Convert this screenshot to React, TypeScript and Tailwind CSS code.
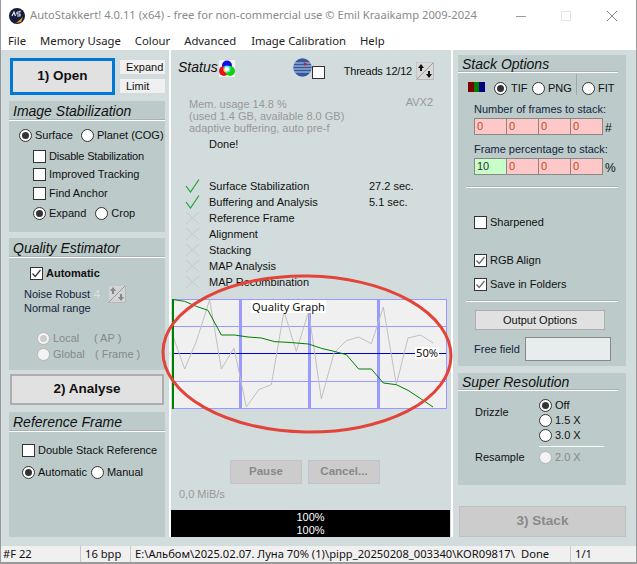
import React from "react";

const cx = (...a: string[]) => a.join(" ");

function Radio({ on, off, className = "" }: { on?: boolean; off?: boolean; className?: string }) {
  return (
    <span className={cx("flex items-center justify-center w-[13px] h-[13px] rounded-full border shrink-0", off ? "border-[#b5b5b5] bg-[#f4f4f4]" : "border-[#333] bg-white", className)}>
      {on && <span className={cx("w-[7px] h-[7px] rounded-full", off ? "bg-[#ccc]" : "bg-[#333]")} />}
    </span>
  );
}
function Check({ on, grey }: { on?: boolean; grey?: boolean }) {
  return (
    <span className="flex items-center justify-center w-[13px] h-[13px] border border-[#333] bg-white shrink-0">
      {on && (
        <svg width="11" height="11" viewBox="0 0 11 11">
          <path d="M1.5 5.5 L4.2 8.5 L9.5 2" fill="none" stroke={grey ? "#666" : "#333"} strokeWidth="1.2" />
        </svg>
      )}
    </span>
  );
}
function PanelTitle({ children, w = "" }: { children: React.ReactNode; w?: string }) {
  return (
    <div className={cx("h-[20px] pl-[4px] text-[14px] leading-[20px] italic text-[#111] border-b border-b-white shadow-[0_-1px_0_0_#a9b3b3_inset]", w)}>
      {children}
    </div>
  );
}
function ArrowsBtn({ grey }: { grey?: boolean }) {
  const c = grey ? "#888" : "#111";
  return (
    <svg width="18" height="18" viewBox="0 0 18 18" className="shrink-0">
      <rect x="0" y="0" width="18" height="18" fill={grey ? "#d0d6d6" : "#d8d8d8"} />
      <path d="M0 18 L18 0" stroke="#9a9a9a" strokeWidth="1" />
      <path d="M0 0H17.5V17.5H0Z" fill="none" stroke="#b8b8b8" />
      <path d="M5 2 L8 6 H6v3H4V6H2Z" fill={c} />
      <path d="M13 16 L10 12 H12V9h2v3h2Z" fill={c} />
    </svg>
  );
}
function Wheel() {
  return (
    <svg width="16" height="17" viewBox="0 0 16 17">
      <rect width="16" height="17" fill="#f4f4f4" />
      <circle cx="8" cy="5.5" r="5" fill="#1010e0" />
      <circle cx="5" cy="11" r="5" fill="#f01010" />
      <circle cx="11" cy="11" r="5" fill="#10d010" />
      <circle cx="8" cy="9" r="3.6" fill="#50e8e8" />
      <path d="M4.6 9 A3.6 3.6 0 0 0 8 12.6 V9Z" fill="#f0e040" />
      <circle cx="8" cy="9" r="2.1" fill="#fff" />
    </svg>
  );
}
function Globe() {
  return (
    <svg width="19" height="19" viewBox="0 0 19 19" className="shrink-0">
      <circle cx="9.5" cy="9.5" r="9.2" fill="#2f5aa0" />
      <path d="M1 5H18M0.5 8H18.5M0.5 11H18.5M1 14H18" stroke="#c8d0e0" strokeWidth="1" />
      <circle cx="12" cy="6" r="1.6" fill="#c02030" />
    </svg>
  );
}
function Logo() {
  return (
    <svg width="16" height="16" viewBox="0 0 16 16">
      <circle cx="8" cy="8" r="8" fill="#141d3c" />
      <circle cx="11" cy="3.5" r="1" fill="#aab" />
      <path d="M3 8 L5 4 L6.5 8 M8 4h3M8 4v2h3v2h-3" stroke="#e8e8f0" strokeWidth="1.2" fill="none" />
      <path d="M7 15 L14 9 L12 14Z" fill="#e8a020" />
    </svg>
  );
}
function Cross() {
  return (
    <svg width="15" height="14" viewBox="0 0 15 14" className="shrink-0">
      <path d="M1 1 L14 13 M14 1 L1 13" stroke="#c3cccc" strokeWidth="1" />
    </svg>
  );
}
function Tick() {
  return (
    <svg width="15" height="14" viewBox="0 0 15 14" className="shrink-0">
      <path d="M1 7 L5.5 13 L14 0.5" stroke="#10a030" strokeWidth="1.1" fill="none" />
    </svg>
  );
}
function Cells({ first, firstGreen, unit }: { first: string; firstGreen?: boolean; unit: string }) {
  const vals = [first, "0", "0", "0"];
  return (
    <div className="flex items-end h-[17px]">
      {vals.map((v, i) => (
        <div key={i} className={cx("w-[32px] h-[17px] border-y border-l border-[#888] pl-[2px] text-[11px] leading-[15px]", i === 3 ? "border-r w-[33px]" : "", firstGreen && i === 0 ? "bg-[#c8ffc8] text-[#333]" : "bg-[#ffc8c8] text-[#c04a20]")}>
          {v}
        </div>
      ))}
      <span className="ml-[2px] text-[12px] leading-[13px] text-[#111]">{unit}</span>
    </div>
  );
}

const GREY = "57,205 90,298 125,215 165,90 200,298 238,235 275,412 312,360 350,345 388,125 425,245 462,125 500,388 538,250 575,213 612,202 650,222 686,112 725,345 760,205 798,196 835,220";
const GREEN = "57,90 90,95 125,110 160,122 200,196 240,196 280,202 320,205 360,216 400,218 462,223 500,236 538,245 575,255 612,298 650,298 686,340 725,345 760,362 798,387 835,412";

const steps = [
  { t: "Surface Stabilization", d: true, s: "27.2 sec." },
  { t: "Buffering and Analysis", d: true, s: "5.1 sec." },
  { t: "Reference Frame" },
  { t: "Alignment" },
  { t: "Stacking" },
  { t: "MAP Analysis" },
  { t: "MAP Recombination" },
];

const btn = "flex items-center justify-center bg-[#e1e1e1] border-2 border-[#adadad]";
const row = "flex items-center h-[13px] gap-[3px]";

export default function App() {
  return (
    <div className="relative w-[637px] h-[564px] flex flex-col overflow-hidden border-x border-[#9a9a9a] bg-[#d2dcdc] text-[11px] text-[#111] font-['Liberation_Sans',sans-serif]">
      {/* title bar */}
      <div className="h-[31px] flex items-center bg-white pl-[8px] shrink-0">
        <Logo />
        <span className="ml-[5px] text-[11.2px] text-[#8a8a8a] font-['Noto_Sans',sans-serif] whitespace-nowrap">
          AutoStakkert! 4.0.11 (x64) - free for non-commercial use © Emil Kraaikamp 2009-2024
        </span>
        <div className="ml-auto flex items-center">
          <svg width="137" height="14" viewBox="0 0 137 14">
            <path d="M17 7.5H27" stroke="#9a9a9a" />
            <rect x="62.5" y="2.5" width="9" height="9" fill="none" stroke="#e4e4e4" />
            <path d="M108 2L118 12M118 2L108 12" stroke="#888" />
          </svg>
        </div>
      </div>
      {/* menu */}
      <div className="h-[19px] flex items-center bg-white shrink-0 pl-[7px] pt-[1px] gap-[14px] text-[11.3px] text-[#222] font-['Noto_Sans',sans-serif]">
        <span>File</span>
        <span>Memory Usage</span>
        <span>Colour</span>
        <span>Advanced</span>
        <span className="ml-[1px]">Image Calibration</span>
        <span>Help</span>
      </div>
      {/* body */}
      <div className="flex-1 flex min-h-0">
        {/* left */}
        <div className="w-[170px] pl-[8px] pt-[8px] shrink-0 border-r-2 border-r-white h-[487px]">
          <div className="flex gap-[5px] h-[37px] pl-[1px]">
            <div className="w-[105px] h-[37px] flex items-center justify-center bg-[#e1e1e1] border-[3px] border-[#0078d7] text-[13.5px] font-bold">1) Open</div>
            <div className="flex flex-col gap-[5px] pt-[2px]">
              <div className="w-[45px] h-[14px] bg-[#f0f0f0] pl-[6px] leading-[14px]">Expand</div>
              <div className="w-[45px] h-[14px] bg-[#f0f0f0] pl-[6px] leading-[14px]">Limit</div>
            </div>
          </div>
          <div className="mt-[6px] w-[156px] h-[131px] bg-[#bccaca]">
            <PanelTitle>Image Stabilization</PanelTitle>
            <div className="pl-[10px] pt-[8px] flex flex-col">
              <div className="flex items-center h-[13px] whitespace-nowrap">
                <Radio on /><span className="ml-[3px]">Surface</span>
                <Radio className="ml-[8px]" /><span className="ml-[3px]">Planet (COG)</span>
              </div>
              <div className="pl-[14px] flex flex-col whitespace-nowrap">
                <div className={cx(row, "mt-[8px]")}><Check /><span className="tracking-[-0.2px]">Disable Stabilization</span></div>
                <div className={cx(row, "mt-[5px]")}><Check /><span>Improved Tracking</span></div>
                <div className={cx(row, "mt-[6px]")}><Check /><span>Find Anchor</span></div>
                <div className={cx(row, "mt-[7px]")}>
                  <Radio on /><span>Expand</span>
                  <Radio className="ml-[6px]" /><span>Crop</span>
                </div>
              </div>
            </div>
          </div>
          <div className="mt-[6px] w-[156px] h-[132px] bg-[#bccaca]">
            <PanelTitle>Quality Estimator</PanelTitle>
            <div className="pt-[9px] flex flex-col">
              <div className={cx(row, "pl-[21px]")}><Check on /><span className="font-bold">Automatic</span></div>
              <div className="flex items-center h-[18px] mt-[5px] pl-[15px] text-[#14243c]">
                <span>Noise Robust</span>
                <span className="ml-[4px] text-[#dde3e3]">4</span>
                <span className="ml-[8px]"><ArrowsBtn grey /></span>
              </div>
              <div className="pl-[15px] h-[13px] mt-[-1px] leading-[13px] text-[#14243c]">Normal range</div>
              <div className="mt-[17px] pl-[28px] flex items-center h-[13px] text-[#888]">
                <Radio on off /><span className="ml-[3px] w-[41px]">Local</span><span>( AP )</span>
              </div>
              <div className="mt-[3px] pl-[28px] flex items-center h-[13px] text-[#888]">
                <Radio off /><span className="ml-[3px] w-[42px]">Global</span><span>( Frame )</span>
              </div>
            </div>
          </div>
          <div className={cx(btn, "mt-[4px] ml-[1px] w-[154px] h-[31px] text-[13.5px] font-bold")}>2) Analyse</div>
          <div className="mt-[7px] w-[156px] h-[125px] bg-[#bccaca]">
            <PanelTitle>Reference Frame</PanelTitle>
            <div className="pl-[13px] pt-[12px] flex flex-col whitespace-nowrap">
              <div className={row}><Check /><span>Double Stack Reference</span></div>
              <div className={cx(row, "mt-[9px]")}>
                <Radio on /><span>Automatic</span>
                <Radio className="ml-[1px]" /><span>Manual</span>
              </div>
            </div>
          </div>
        </div>
        {/* middle */}
        <div className="w-[279px] shrink-0 flex flex-col h-[487px]">
          <div className="h-[29px] flex items-start pt-[8px] pl-[7px]">
            <span className="text-[14px] italic leading-[18px]">Status</span>
            <span className="ml-[1px] mt-[2px]"><Wheel /></span>
            <span className="ml-[58px]"><Globe /></span>
            <span className="mt-[8px]"><Check /></span>
            <span className="ml-[19px] mt-[7px] text-[11px] tracking-[-0.2px] leading-[13px] whitespace-nowrap">Threads 12/12</span>
            <span className="ml-[4px] mt-[4px]"><ArrowsBtn /></span>
          </div>
          <div className="relative pl-[18px] mt-[19px] text-[11px] leading-[12px] text-[#999]">
            <div>Mem. usage 14.8 %</div>
            <div>(used 1.4 GB, available 8.0 GB)</div>
            <div>adaptive buffering, auto pre-f</div>
            <div className="absolute right-[17px] top-[-2px] text-[11px]">AVX2</div>
          </div>
          <div className="pl-[38px] mt-[3px] h-[14px] leading-[14px]">Done!</div>
          <div className="mt-[27px] flex flex-col">
            {steps.map((s) => (
              <div key={s.t} className="flex items-center h-[16px] pl-[14px]">
                {s.d ? <Tick /> : <Cross />}
                <span className="ml-[9px] w-[160px] whitespace-nowrap">{s.t}</span>
                {s.s && <span>{s.s}</span>}
              </div>
            ))}
          </div>
          <div className="relative mt-[9px] ml-[1px] w-[275px] h-[110px]">
            <svg width="275" height="110" viewBox="52 88 825 330" className="block">
              <rect x="52" y="88" width="825" height="330" fill="#f0f0f0" />
              <g shapeRendering="crispEdges">
                <path d="M52 89.5H875.5V416.5H52Z" fill="none" stroke="#9999ff" strokeWidth="3" />
                <path d="M52 170.5H875M52 335.5H875" stroke="#9999ff" strokeWidth="3" />
                <path d="M257.5 88V418M464.5 88V418M671.5 88V418" stroke="#9999ff" strokeWidth="9" />
                <path d="M55 251.5H875" stroke="#0000c0" strokeWidth="3" />
              </g>
              <polyline points={GREY} fill="none" stroke="#c0c0c0" strokeWidth="3" />
              <polyline points={GREEN} fill="none" stroke="#008000" strokeWidth="3" />
              <path d="M55 88V418" stroke="#008000" strokeWidth="6" shapeRendering="crispEdges" />
            </svg>
            <div className="absolute left-[79px] top-[1px] h-[13px] px-[1px] bg-white leading-[13px] whitespace-nowrap text-[11.2px] font-['Noto_Sans',sans-serif]">Quality Graph</div>
            <div className="absolute left-[243px] top-[48px] h-[12px] px-[1px] bg-white leading-[12px] text-[11.2px] font-['Noto_Sans',sans-serif]">50%</div>
          </div>
          <div className="mt-[51px] pl-[59px] flex gap-[6px]">
            <div className="w-[72px] h-[24px] flex items-center justify-center bg-[#cccccc] border border-[#c4c4c4] font-bold text-[11.5px] text-[#888]">Pause</div>
            <div className="w-[72px] h-[24px] flex items-center justify-center bg-[#cccccc] border border-[#c4c4c4] font-bold text-[11.5px] text-[#888]">Cancel...</div>
          </div>
          <div className="pl-[8px] mt-[4px] h-[13px] leading-[13px] text-[#999]">0,0 MiB/s</div>
          <div className="mt-[9px] h-[27px] bg-black text-white text-center text-[11px] leading-[13px] pt-[1px]">
            <div>100%</div>
            <div>100%</div>
          </div>
        </div>
        {/* right */}
        <div className="flex-1 pl-[5px] border-l-2 border-l-white ml-[1px] h-[487px]">
          <div className="mt-[5px] w-[168px] h-[311px] bg-[#bccaca] overflow-hidden">
            <PanelTitle w="w-[160px] !h-[18px] !leading-[19px]">Stack Options</PanelTitle>
            <div className="flex items-end h-[22px] pl-[10px]">
              <svg width="17" height="10" viewBox="0 0 17 10" className="shrink-0 mb-[3px]">
                <rect width="6" height="10" fill="#800000" />
                <rect x="6" width="5" height="10" fill="#008000" />
                <rect x="11" width="6" height="10" fill="#000080" />
              </svg>
              <Radio on className="ml-[9px]" /><span className="ml-[4px] w-[21px] leading-[13px]">TIF</span>
              <Radio /><span className="ml-[3px] w-[28px] leading-[13px]">PNG</span>
              <span className="w-px h-[21px] bg-[#9fabab]" />
              <Radio className="ml-[5px]" /><span className="ml-[3px] leading-[13px]">FIT</span>
            </div>
            <div className="pl-[16px] mt-[7px] h-[14px] leading-[14px] text-[#14243c] whitespace-nowrap">Number of frames to stack:</div>
            <div className="pl-[16px] mt-[2px]"><Cells first="0" unit="#" /></div>
            <div className="pl-[16px] mt-[7px] h-[14px] leading-[14px] text-[#14243c] whitespace-nowrap">Frame percentage to stack:</div>
            <div className="pl-[16px] mt-[2px]"><Cells first="10" firstGreen unit="%" /></div>
            <div className="ml-[8px] w-[152px] h-[2px] mt-[11px] bg-white border-t border-[#a9b3b3]" />
            <div className={cx(row, "pl-[16px] mt-[28px]")}><Check /><span>Sharpened</span></div>
            <div className={cx(row, "pl-[16px] mt-[25px]")}><Check on grey /><span>RGB Align</span></div>
            <div className={cx(row, "pl-[16px] mt-[11px]")}><Check on grey /><span>Save in Folders</span></div>
            <div className="ml-[8px] w-[152px] h-[2px] mt-[9px] bg-white border-t border-[#a9b3b3]" />
            <div className="ml-[17px] mt-[8px] w-[130px] h-[20px] flex items-center justify-center bg-[#e1e1e1] border border-[#adadad]">Output Options</div>
            <div className="flex items-center pl-[16px] mt-[7px]">
              <span className="w-[51px] text-[#14243c]">Free field</span>
              <div className="w-[86px] h-[24px] bg-[#e8ecec] border border-[#888]" />
            </div>
          </div>
          <div className="mt-[7px] w-[168px] h-[112px] bg-[#bccaca]">
            <PanelTitle w="w-[160px] !h-[18px] !leading-[19px]">Super Resolution</PanelTitle>
            <div className="relative pl-[81px] pt-[7px]">
              <div className="absolute left-[17px] top-[14px] leading-[14px]">Drizzle</div>
              <div className="flex items-center h-[15px]"><Radio on /><span className="ml-[3px]">Off</span></div>
              <div className="flex items-center h-[15px]"><Radio /><span className="ml-[3px]">1.5 X</span></div>
              <div className="flex items-center h-[15px]"><Radio /><span className="ml-[3px]">3.0 X</span></div>
              <div className="w-[65px] h-[1px] bg-white mt-[3px]" />
              <div className="flex items-center h-[15px] mt-[3px] text-[#888]"><Radio off /><span className="ml-[3px]">2.0 X</span></div>
              <div className="absolute left-[17px] top-[59px] leading-[14px]">Resample</div>
            </div>
          </div>
          <div className="mt-[21px] ml-[1px] w-[167px] h-[31px] flex items-center justify-center bg-[#cccccc] border border-[#c0c0c0] text-[13.5px] font-bold text-[#8a8a8a]">3) Stack</div>
        </div>
      </div>
      {/* status bar */}
      <div className="h-[16px] shrink-0 flex items-center bg-[#f0f0f0] text-[11.2px] leading-[16px] text-[#111] font-['Noto_Sans',sans-serif] whitespace-nowrap">
        <div className="w-[80px] pl-[2px] h-full border-r border-[#c8c8c8]">#F 22</div>
        <div className="w-[50px] pl-[4px] h-full border-r border-[#c8c8c8]">16 bpp</div>
        <div className="w-[440px] pl-[4px] h-full border-r border-[#c8c8c8] flex">
          <span className="w-[386px] shrink-0">E:\Альбом\2025.02.07. Луна 70% (1)\pipp_20250208_003340\KOR09817\</span>
          <span>Done</span>
        </div>
        <div className="pl-[4px]">1/1</div>
      </div>
      <div className="h-[2px] shrink-0 bg-[#9a9a9a]" />
      {/* hand-drawn annotation over the graph */}
      <svg width="637" height="564" viewBox="0 0 637 564" className="absolute left-[-1px] top-0 pointer-events-none">
        <ellipse cx="307" cy="354" rx="144" ry="78" fill="none" stroke="#e2443a" strokeWidth="3" transform="rotate(1 307 354)" />
      </svg>
    </div>
  );
}
